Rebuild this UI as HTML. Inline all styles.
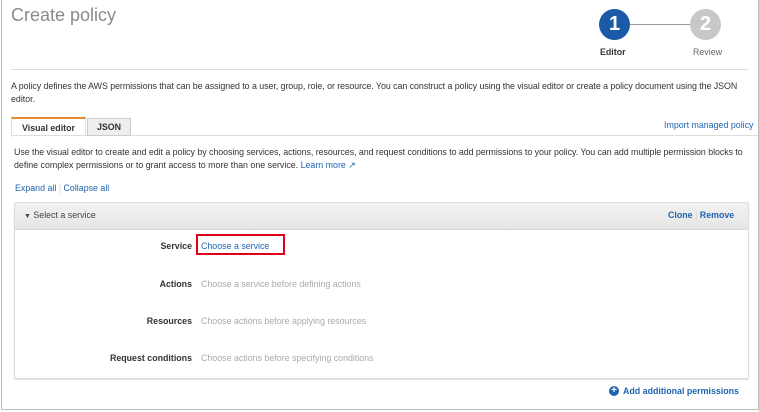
<!DOCTYPE html><html><head><style>
body{margin:0;width:759px;height:412px;background:#fff;font-family:"Liberation Sans",Arial,sans-serif;position:relative;overflow:hidden;font-size:8.85px;color:#444}
.a{position:absolute;white-space:nowrap}
.lnk{color:#1f64b0}
.lbl{font-weight:bold;color:#333;text-align:right;width:180px;left:12px}
.ph{color:#aaa;left:201px}
</style></head><body>
<div class="a" style="left:1px;top:0;width:756px;height:409px;border:1px solid #bbb;border-top:none"></div>
<div class="a" style="left:11px;top:5px;font-size:18px;color:#8a8a8a">Create policy</div>
<div class="a" style="left:11px;top:69px;width:737px;height:1px;background:#ddd"></div>
<div class="a" style="left:622px;top:24px;width:84px;height:1px;background:#999"></div>
<div class="a" style="left:599px;top:9px;width:31px;height:31px;border-radius:50%;background:#1a5aa6;color:#fff;font-weight:bold;font-size:20px;text-align:center;line-height:31px">1</div>
<div class="a" style="left:690px;top:9px;width:31px;height:31px;border-radius:50%;background:#c8c8c8;color:#fff;font-weight:bold;font-size:20px;text-align:center;line-height:31px">2</div>
<div class="a" style="left:600px;top:47px;font-weight:bold;color:#333">Editor</div>
<div class="a" style="left:693px;top:47px;color:#666">Review</div>
<div class="a" style="left:11px;top:81px;color:#333;letter-spacing:-0.05px">A policy defines the AWS permissions that can be assigned to a user, group, role, or resource. You can construct a policy using the visual editor or create a policy document using the JSON</div>
<div class="a" style="left:11px;top:94px;color:#333">editor.</div>
<div class="a" style="left:11px;top:117px;width:73px;height:18px;border:1px solid #ddd;border-top:2px solid #e48a2c;border-bottom:none;background:#fff;font-weight:bold;color:#333;text-align:center;line-height:18px">Visual editor</div>
<div class="a" style="left:87px;top:118px;width:42px;height:16px;border:1px solid #ccc;background:#eee;font-weight:bold;color:#333;text-align:center;line-height:17px">JSON</div>
<div class="a" style="left:11px;top:135px;width:747px;height:1px;background:#ddd"></div>
<div class="a" style="left:86px;top:135px;width:44px;height:1px;background:#ccc"></div>
<div class="a lnk" style="left:664px;top:120px">Import managed policy</div>
<div class="a" style="left:14px;top:147px;color:#333;letter-spacing:-0.05px">Use the visual editor to create and edit a policy by choosing services, actions, resources, and request conditions to add permissions to your policy. You can add multiple permission blocks to</div>
<div class="a" style="left:14px;top:160px;color:#333">define complex permissions or to grant access to more than one service. <span class="lnk">Learn more ↗</span></div>
<div class="a lnk" style="left:15px;top:183px">Expand all <span style="color:#ccc">|</span> Collapse all</div>
<div class="a" style="left:14px;top:202px;width:733px;height:175px;border:1px solid #ddd;border-radius:2px;box-shadow:0 1px 1px #ddd"></div>
<div class="a" style="left:15px;top:203px;width:733px;height:26px;background:linear-gradient(#f2f2f2,#e6e6e6);border-bottom:1px solid #d6d6d6"></div>
<div class="a" style="left:24px;top:210px;color:#444"><span style="font-size:7px">▼</span> Select a service</div>
<div class="a lnk" style="left:668px;top:210px;font-weight:bold">Clone <span style="color:#ccc;font-weight:normal">|</span> Remove</div>
<div class="a lbl" style="top:241px">Service</div>
<div class="a" style="left:196px;top:234px;width:89px;height:21px;border:2px solid #e0001a;box-sizing:border-box"></div>
<div class="a lnk" style="left:201px;top:241px">Choose a service</div>
<div class="a lbl" style="top:279px">Actions</div>
<div class="a ph" style="top:279px">Choose a service before defining actions</div>
<div class="a lbl" style="top:316px">Resources</div>
<div class="a ph" style="top:316px">Choose actions before applying resources</div>
<div class="a lbl" style="top:353px">Request conditions</div>
<div class="a ph" style="top:353px">Choose actions before specifying conditions</div>
<div class="a" style="left:609px;top:386px;width:10px;height:10px;border-radius:50%;background:#1f64b0;color:#fff;font-size:10px;font-weight:bold;text-align:center;line-height:10px">+</div>
<div class="a lnk" style="left:623px;top:386px;font-weight:bold">Add additional permissions</div>
</body></html>
